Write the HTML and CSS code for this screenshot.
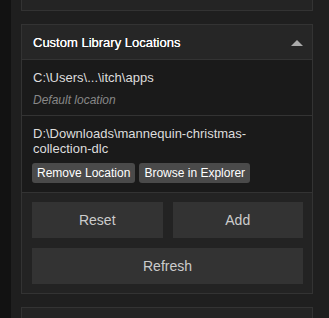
FILE: index.html
```html
<!DOCTYPE html>
<html lang="en">
<head>
    <meta charset="UTF-8">
    <meta name="viewport" content="width=device-width, initial-scale=1.0">
    <title>Library Locations</title>
    <link rel="stylesheet" href="styles.css">
</head>
<body>
    <div class="wrapper">
        <div class="side_strip"></div>
        <div class="main_col">
            <div class="panel panel_top"></div>

            <div class="panel">
                <div class="panel_head">
                    <h3>Custom Library Locations</h3>
                    <span class="caret"></span>
                </div>

                <div class="loc_list">
                    <div class="loc_item">
                        <div class="loc_path">C:\Users\...\itch\apps</div>
                        <div class="loc_note">Default location</div>
                    </div>
                    <div class="loc_item">
                        <div class="loc_path">D:\Downloads\mannequin-christmas-collection-dlc</div>
                        <div class="loc_actions">
                            <button class="small_btn">Remove Location</button>
                            <button class="small_btn">Browse in Explorer</button>
                        </div>
                    </div>
                </div>

                <div class="panel_foot">
                    <button class="big_btn">Reset</button>
                    <button class="big_btn">Add</button>
                    <button class="big_btn wide">Refresh</button>
                </div>
            </div>

            <div class="panel panel_next"></div>
        </div>
    </div>
</body>
</html>
```

FILE: styles.css
```css
* {
  margin: 0;
  padding: 0;
  box-sizing: border-box;
}

body {
  background-color: #1f1f1f;
  font-family: "Liberation Sans", Arial, sans-serif;
  font-size: 13px;
  color: #ddd;
  overflow: hidden;
}

.wrapper {
  display: flex;
  height: 318px;
}

.side_strip {
  width: 11px;
  background-color: #121212;
}

.main_col {
  display: flex;
  flex-direction: column;
  gap: 13px;
  width: 292px;
  margin-left: 10px;
}

.panel {
  flex-shrink: 0;
  border: 1px solid #333;
  background-color: #232323;
}

.panel_top {
  height: 11px;
  border-top: none;
  background-color: #242424;
}

.panel_next {
  height: 20px;
  background-color: #242424;
}

.panel_head {
  display: flex;
  justify-content: space-between;
  align-items: center;
  height: 35px;
  padding: 0 9px 0 11px;
  background-color: #262626;
  border-bottom: 1px solid #333;
}

.panel_head h3 {
  font-size: 13px;
  font-weight: normal;
  color: #fff;
  text-shadow: 0 0 0.4px #fff;
}

.caret {
  width: 0;
  height: 0;
  border-left: 6px solid transparent;
  border-right: 6px solid transparent;
  border-bottom: 6px solid #aaa;
  margin-top: 1px;
}

.loc_list {
  background-color: #1a1a1a;
  border-bottom: 1px solid #333;
}

.loc_item {
  padding: 10px 11px 8px 11px;
  line-height: 15px;
}

.loc_item + .loc_item {
  border-top: 1px solid #333;
  padding-bottom: 9px;
}

.loc_path {
  color: #ddd;
}

.loc_note {
  margin-top: 8px;
  font-size: 12px;
  line-height: 14px;
  font-style: italic;
  color: #888;
}

.loc_actions {
  display: flex;
  gap: 4px;
  margin-top: 7px;
  margin-left: -1px;
}

.small_btn {
  height: 20px;
  padding: 0 5px;
  background-color: #4a4a4a;
  color: #fff;
  border: none;
  border-radius: 3px;
  font-family: inherit;
  font-size: 12px;
}

.panel_foot {
  display: grid;
  grid-template-columns: 1fr 1fr;
  gap: 10px;
  padding: 9px 9px 9px 10px;
}

.big_btn {
  height: 36px;
  background-color: #333;
  color: #ccc;
  border: none;
  font-family: inherit;
  font-size: 14px;
}

.big_btn.wide {
  grid-column: span 2;
}
```
